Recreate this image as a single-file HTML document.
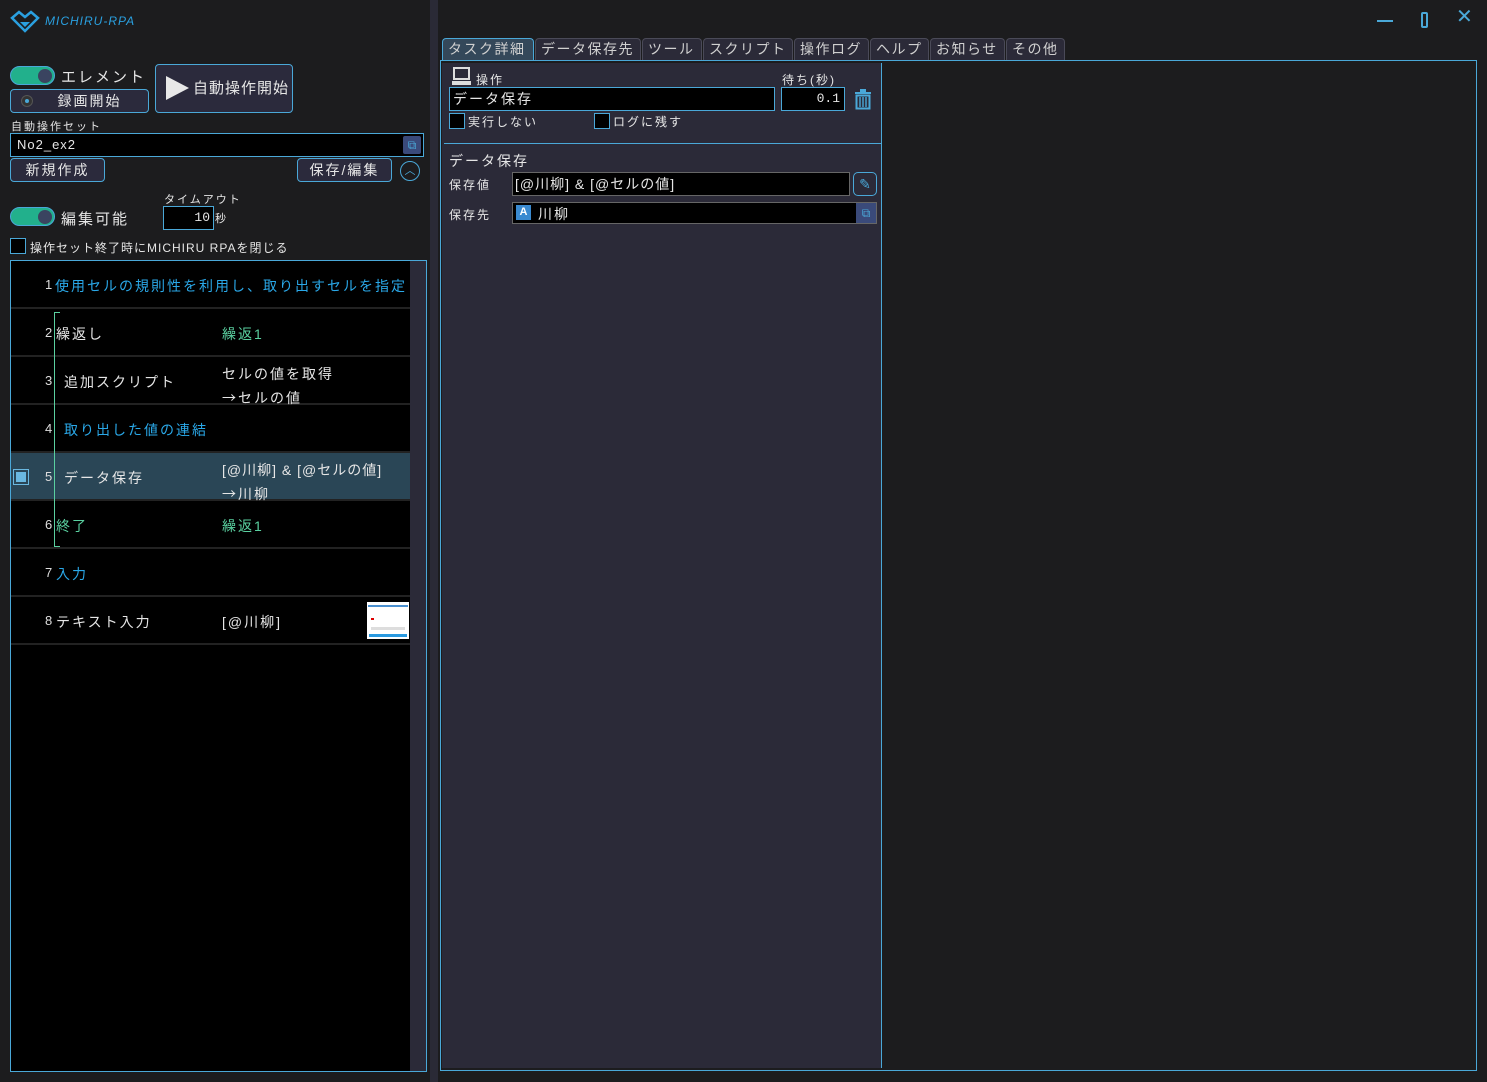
<!DOCTYPE html>
<html><head><meta charset="utf-8">
<style>
*{box-sizing:border-box;margin:0;padding:0}
body{width:1487px;height:1082px;overflow:hidden;background:#1c1c1e;font-family:"Liberation Sans","Noto Sans CJK JP",sans-serif;color:#e6e6e6;position:relative;font-size:14px}
.a{position:absolute}
.btn{position:absolute;border:1px solid #4aa8d8;border-radius:4px;background:#2b2a3c;color:#e6e6e6;text-align:center;font-size:14px;letter-spacing:2px}
.tog{position:absolute;width:45px;height:19px;border-radius:10px;background:#22b08c;border:1px solid #4aa8d8}
.tog:after{content:"";position:absolute;right:2px;top:2px;width:14px;height:14px;border-radius:50%;background:#3a4460}
.inp{position:absolute;background:#000;border:1px solid #4aa8d8}
.chk{position:absolute;width:16px;height:16px;background:#000;border:1px solid #4aa8d8}
.row{position:absolute;left:11px;width:399px;height:48px;border-bottom:2px solid #222}
.num{position:absolute;left:45px;font-size:13px;color:#ddd}
.t{position:absolute;font-size:14px;letter-spacing:2px;white-space:nowrap}
.ar{font-family:"Noto Sans CJK JP",sans-serif}
.blue{color:#2aa8e8}.green{color:#5ad0a0}
.tab{position:absolute;top:38px;height:22px;background:#2b2a38;border:1px solid #4a4a58;border-bottom:none;border-radius:4px 4px 0 0;font-size:14px;color:#d0d0d0;padding:0 5px;line-height:21px;letter-spacing:1.5px;white-space:nowrap;overflow:hidden}
</style></head><body>
<svg class="a" style="left:10px;top:10px" width="30" height="24" viewBox="0 0 30 24"><path d="M2 8 L9 2 L15 7 L21 2 L28 8 L15 21 Z" fill="none" stroke="#2aa0e0" stroke-width="2.5"/><path d="M10 12 L20 12 L15 17Z" fill="#2aa0e0"/></svg>
<div class="a" style="left:45px;top:14px;font-size:12px;color:#2aa0e0;font-style:italic;letter-spacing:1px">MICHIRU-RPA</div>
<div class="a" style="left:1377px;top:20px;width:16px;height:2px;background:#4aa8d8"></div>
<div class="a" style="left:1421px;top:12px;width:7px;height:16px;border:2px solid #4aa8d8;border-radius:2px"></div>
<div class="a" style="left:1456px;top:4px;font-size:20px;color:#4aa8d8">✕</div>
<div class="a" style="left:430px;top:0;width:8px;height:1082px;background:#2a2a36"></div>
<div class="tog" style="left:10px;top:66px"></div>
<div class="t" style="left:61px;top:66px;font-size:15px">エレメント</div>
<div class="btn" style="left:10px;top:89px;width:139px;height:24px;line-height:22px;padding-left:20px">録画開始</div>
<div class="a" style="left:21px;top:95px;width:12px;height:12px;border-radius:50%;background:#333;border:1px solid #555"></div>
<div class="a" style="left:25px;top:99px;width:4px;height:4px;border-radius:50%;background:#4aa8d8"></div>
<div class="btn" style="left:155px;top:64px;width:138px;height:49px;line-height:47px;padding-left:37px;text-align:left;font-size:15px;letter-spacing:1px">自動操作開始</div>
<svg class="a" style="left:165px;top:75px" width="25" height="26"><path d="M1 1 L24 13 L1 25Z" fill="#e8e8e8"/></svg>
<div class="t" style="left:11px;top:118px;font-size:11px">自動操作セット</div>
<div class="inp" style="left:10px;top:133px;width:414px;height:24px"></div>
<div class="t" style="left:17px;top:137px;font-size:13px;letter-spacing:1px">No2_ex2</div>
<div class="a" style="left:403px;top:136px;width:18px;height:18px;background:#3a4a7a;border-radius:2px;color:#4aa8d8;font-size:12px;text-align:center;line-height:18px">⧉</div>
<div class="btn" style="left:10px;top:158px;width:95px;height:24px;line-height:22px">新規作成</div>
<div class="btn" style="left:297px;top:158px;width:95px;height:24px;line-height:22px">保存/編集</div>
<div class="a" style="left:400px;top:161px;width:20px;height:20px;border:1px solid #4aa8d8;border-radius:50%;color:#4aa8d8;font-size:11px;text-align:center;line-height:18px">︿</div>
<div class="t" style="left:164px;top:191px;font-size:11px">タイムアウト</div>
<div class="tog" style="left:10px;top:207px"></div>
<div class="t" style="left:61px;top:208px;font-size:15px">編集可能</div>
<div class="inp" style="left:163px;top:206px;width:51px;height:24px;text-align:right;padding-right:3px;font-size:13px;line-height:22px;font-family:'Liberation Mono',monospace">10</div>
<div class="t" style="left:215px;top:210px;font-size:11px">秒</div>
<div class="chk" style="left:10px;top:238px"></div>
<div class="t" style="left:30px;top:239px;font-size:12px;letter-spacing:1px">操作セット終了時にMICHIRU RPAを閉じる</div>
<div class="a" style="left:10px;top:260px;width:417px;height:812px;border:1px solid #4aa8d8;background:#000"></div>
<div class="a" style="left:410px;top:261px;width:16px;height:810px;background:#2b2a38"></div>
<div class="row" style="top:261px"></div><div class="row" style="top:309px"></div><div class="row" style="top:357px"></div><div class="row" style="top:405px"></div>
<div class="row" style="top:453px;background:#2a4656"></div><div class="row" style="top:501px"></div><div class="row" style="top:549px"></div><div class="row" style="top:597px"></div>
<div class="a" style="left:54px;top:312px;width:1px;height:235px;background:#5ad0a0"></div>
<div class="a" style="left:54px;top:312px;width:6px;height:1px;background:#5ad0a0"></div>
<div class="a" style="left:54px;top:546px;width:6px;height:1px;background:#5ad0a0"></div>
<div class="num" style="top:277px">1</div><div class="t blue" style="left:55px;top:276px">使用セルの規則性を利用し、取り出すセルを指定</div>
<div class="num" style="top:325px">2</div><div class="t" style="left:56px;top:324px">繰返し</div><div class="t green" style="left:222px;top:324px">繰返1</div>
<div class="num" style="top:373px">3</div><div class="t" style="left:64px;top:372px">追加スクリプト</div><div class="t" style="left:222px;top:364px">セルの値を取得</div><div class="t" style="left:222px;top:388px"><span class="ar">→</span>セルの値</div>
<div class="num" style="top:421px">4</div><div class="t blue" style="left:64px;top:420px">取り出した値の連結</div>
<div class="a" style="left:13px;top:469px;width:16px;height:16px;border:1px solid #6ab8e0"></div><div class="a" style="left:16px;top:472px;width:10px;height:10px;background:#6ab8e0"></div>
<div class="num" style="top:469px">5</div><div class="t" style="left:64px;top:468px">データ保存</div><div class="t" style="left:222px;top:460px;letter-spacing:1px">[@川柳] & [@セルの値]</div><div class="t" style="left:222px;top:484px"><span class="ar">→</span>川柳</div>
<div class="num" style="top:517px">6</div><div class="t green" style="left:56px;top:516px">終了</div><div class="t green" style="left:222px;top:516px">繰返1</div>
<div class="num" style="top:565px">7</div><div class="t blue" style="left:56px;top:564px">入力</div>
<div class="num" style="top:613px">8</div><div class="t" style="left:56px;top:612px">テキスト入力</div><div class="t" style="left:222px;top:612px">[@川柳]</div>
<div class="a" style="left:367px;top:602px;width:42px;height:37px;background:#fff"><div class="a" style="left:1px;top:3px;width:40px;height:2px;background:#4a90d0"></div><div class="a" style="left:2px;top:32px;width:38px;height:3px;background:#2a9ae0"></div><div class="a" style="left:4px;top:16px;width:3px;height:2px;background:#d00"></div><div class="a" style="left:4px;top:25px;width:34px;height:3px;background:#ddd"></div></div>
<div class="tab" style="left:442px;width:92px;border-color:#4aa8d8;background:#34485a">タスク詳細</div>
<div class="tab" style="left:535px;width:106px">データ保存先</div>
<div class="tab" style="left:642px;width:60px">ツール</div>
<div class="tab" style="left:703px;width:90px">スクリプト</div>
<div class="tab" style="left:794px;width:75px">操作ログ</div>
<div class="tab" style="left:870px;width:59px">ヘルプ</div>
<div class="tab" style="left:930px;width:75px">お知らせ</div>
<div class="tab" style="left:1006px;width:59px">その他</div>
<div class="a" style="left:440px;top:60px;width:1037px;height:1011px;border:1px solid #4aa8d8"></div>
<div class="a" style="left:442px;top:63px;width:440px;height:1005px;background:#2b2a38;border-right:1px solid #4aa8d8"></div>
<svg class="a" style="left:451px;top:67px" width="21" height="20"><rect x="3" y="1" width="15" height="11" fill="none" stroke="#ddd" stroke-width="2"/><path d="M1 14 H20 V18 H1Z" fill="#ddd"/></svg>
<div class="t" style="left:476px;top:71px;font-size:12px">操作</div>
<div class="t" style="left:782px;top:71px;font-size:12px">待ち(秒)</div>
<div class="inp" style="left:449px;top:87px;width:326px;height:24px"></div><div class="t" style="left:453px;top:89px">データ保存</div>
<div class="inp" style="left:781px;top:87px;width:64px;height:24px;text-align:right;padding-right:4px;font-size:13px;line-height:22px;font-family:'Liberation Mono',monospace">0.1</div>
<svg class="a" style="left:854px;top:89px" width="18" height="21"><rect x="1" y="3" width="16" height="2" fill="#4aa8d8"/><rect x="6" y="0" width="6" height="3" fill="#4aa8d8"/><rect x="2.5" y="6.5" width="13" height="13" fill="none" stroke="#4aa8d8" stroke-width="2"/><path d="M6 8V18M9 8V18M12 8V18" stroke="#4aa8d8" stroke-width="1.4"/></svg>
<div class="chk" style="left:449px;top:113px"></div><div class="t" style="left:468px;top:113px;font-size:12px">実行しない</div>
<div class="chk" style="left:594px;top:113px"></div><div class="t" style="left:613px;top:113px;font-size:12px">ログに残す</div>
<div class="a" style="left:444px;top:143px;width:437px;height:1px;background:#4aa8d8"></div>
<div class="t" style="left:449px;top:151px">データ保存</div>
<div class="t" style="left:449px;top:176px;font-size:12px">保存値</div>
<div class="inp" style="left:512px;top:172px;width:338px;height:24px;border-color:#666"></div><div class="t" style="left:515px;top:174px;letter-spacing:1px">[@川柳] & [@セルの値]</div>
<div class="a" style="left:853px;top:172px;width:24px;height:24px;border:1px solid #4aa8d8;border-radius:5px;color:#4aa8d8;text-align:center;line-height:22px;font-size:14px">✎</div>
<div class="t" style="left:449px;top:206px;font-size:12px">保存先</div>
<div class="inp" style="left:512px;top:202px;width:365px;height:22px;border-color:#666"></div>
<div class="a" style="left:516px;top:205px;width:15px;height:15px;background:#3a8ad0;color:#fff;font-size:11px;font-weight:bold;text-align:center;line-height:15px">A</div>
<div class="t" style="left:538px;top:204px">川柳</div>
<div class="a" style="left:856px;top:203px;width:20px;height:20px;background:#3a4a7a;color:#4aa8d8;font-size:12px;text-align:center;line-height:20px">⧉</div>
</body></html>
